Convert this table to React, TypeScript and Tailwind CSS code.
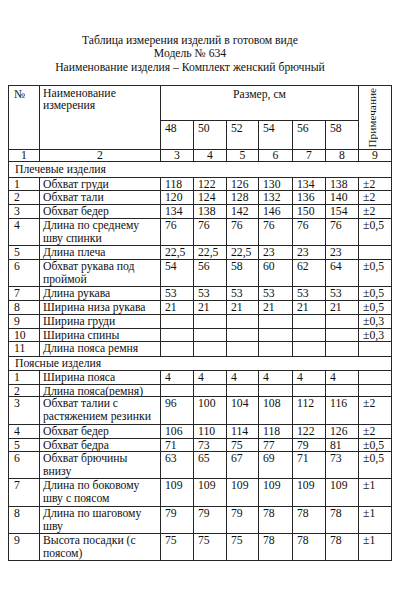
import React from 'react';

type Row = {
  n: string;
  name: string[];
  vals: string[];
  note: string;
  h: number;
};

const sizes = ['48', '50', '52', '54', '56', '58'];

const shoulder: Row[] = [
  { n: '1', name: ['Обхват груди'], vals: ['118', '122', '126', '130', '134', '138'], note: '±2', h: 13 },
  { n: '2', name: ['Обхват тали'], vals: ['120', '124', '128', '132', '136', '140'], note: '±2', h: 14 },
  { n: '3', name: ['Обхват бедер'], vals: ['134', '138', '142', '146', '150', '154'], note: '±2', h: 14 },
  { n: '4', name: ['Длина по среднему', 'шву спинки'], vals: ['76', '76', '76', '76', '76', '76'], note: '±0,5', h: 27 },
  { n: '5', name: ['Длина плеча'], vals: ['22,5', '22,5', '22,5', '23', '23', '23'], note: '', h: 14 },
  { n: '6', name: ['Обхват рукава под', 'проймой'], vals: ['54', '56', '58', '60', '62', '64'], note: '±0,5', h: 27 },
  { n: '7', name: ['Длина рукава'], vals: ['53', '53', '53', '53', '53', '53'], note: '±0,5', h: 14 },
  { n: '8', name: ['Ширина низа рукава'], vals: ['21', '21', '21', '21', '21', '21'], note: '±0,5', h: 14 },
  { n: '9', name: ['Ширина груди'], vals: ['', '', '', '', '', ''], note: '±0,3', h: 14 },
  { n: '10', name: ['Ширина спины'], vals: ['', '', '', '', '', ''], note: '±0,3', h: 13 },
  { n: '11', name: ['Длина пояса ремня'], vals: ['', '', '', '', '', ''], note: '', h: 15 },
];

const waist: Row[] = [
  { n: '1', name: ['Ширина пояса'], vals: ['4', '4', '4', '4', '4', '4'], note: '', h: 14 },
  { n: '2', name: ['Длина пояса(ремня)'], vals: ['', '', '', '', '', ''], note: '', h: 12 },
  { n: '3', name: ['Обхват талии с', 'растяжением резинки'], vals: ['96', '100', '104', '108', '112', '116'], note: '±2', h: 28 },
  { n: '4', name: ['Обхват бедер'], vals: ['106', '110', '114', '118', '122', '126'], note: '±2', h: 14 },
  { n: '5', name: ['Обхват бедра'], vals: ['71', '73', '75', '77', '79', '81'], note: '±0,5', h: 13 },
  { n: '6', name: ['Обхват брючины', 'внизу'], vals: ['63', '65', '67', '69', '71', '73'], note: '±0,5', h: 27 },
  { n: '7', name: ['Длина по боковому', 'шву с поясом'], vals: ['109', '109', '109', '109', '109', '109'], note: '±1', h: 28 },
  { n: '8', name: ['Длина по шаговому', 'шву'], vals: ['79', '79', '79', '78', '78', '78'], note: '±1', h: 27 },
  { n: '9', name: ['Высота посадки (с', 'поясом)'], vals: ['75', '75', '75', '78', '78', '78'], note: '±1', h: 27 },
];

// heights of every grid row, top to bottom
const rowHeights = [35, 29, 12, 16, ...shoulder.map((r) => r.h), 14, ...waist.map((r) => r.h)];

const cell = 'border-r border-b border-[#262626] overflow-hidden whitespace-nowrap';

function DataRow({ row }: { row: Row }) {
  return (
    <>
      <div className={`${cell} pl-[5px] leading-[13.4px]`}>{row.n}</div>
      <div className={`${cell} pl-[3px] leading-[13.4px]`}>
        {row.name.map((line, i) => (
          <div key={i}>{line}</div>
        ))}
      </div>
      {row.vals.map((v, i) => (
        <div key={i} className={`${cell} pl-[4px] leading-[13.4px]`}>
          {v}
        </div>
      ))}
      <div className={`${cell} pl-[4px] leading-[13.4px]`}>{row.note}</div>
    </>
  );
}

export default function App() {
  return (
    <div className="w-[400px] h-[600px] bg-white text-[#111] font-['Liberation_Serif',serif] text-[11.7px]">
      <div className="pt-[34px] pr-[20px] text-center leading-[13.3px]">
        <div>Таблица измерения изделий в готовом виде</div>
        <div>Модель № 634</div>
        <div>Наименование изделия – Комплект женский брючный</div>
      </div>

      <div
        className="mt-[11px] ml-[8px] grid w-[384px] border-l border-t border-[#262626] grid-cols-[31px_121px_33px_33px_32px_34px_33px_33px_33px]"
        style={{ gridTemplateRows: rowHeights.map((h) => `${h}px`).join(' ') }}
      >
        {/* header */}
        <div className={`${cell} row-span-2 pl-[5px] pt-[2px] leading-[13px]`}>№</div>
        <div className={`${cell} row-span-2 pl-[3px] pt-[2px] leading-[12.4px]`}>
          <div>Наименование</div>
          <div>измерения</div>
        </div>
        <div className={`${cell} col-span-6 text-center pt-[2px] leading-[13px]`}>Размер, см</div>
        <div className={`${cell} row-span-2 flex items-center justify-center pr-[7px]`}>
          <span className="[writing-mode:vertical-rl] rotate-180 text-[11.3px] leading-[12px]">Примечание</span>
        </div>
        {sizes.map((s) => (
          <div key={s} className={`${cell} pl-[4px] pt-[1px] leading-[13px]`}>
            {s}
          </div>
        ))}

        {/* column numbers */}
        {['1', '2', '3', '4', '5', '6', '7', '8', '9'].map((n) => (
          <div key={n} className={`${cell} text-center leading-[11px]`}>
            {n}
          </div>
        ))}

        <div className={`${cell} col-span-9 pl-[6px] pt-[1px] leading-[14px]`}>Плечевые изделия</div>
        {shoulder.map((r) => (
          <DataRow key={'s' + r.n} row={r} />
        ))}

        <div className={`${cell} col-span-9 pl-[6px] leading-[13px]`}>Поясные изделия</div>
        {waist.map((r) => (
          <DataRow key={'w' + r.n} row={r} />
        ))}
      </div>
    </div>
  );
}
